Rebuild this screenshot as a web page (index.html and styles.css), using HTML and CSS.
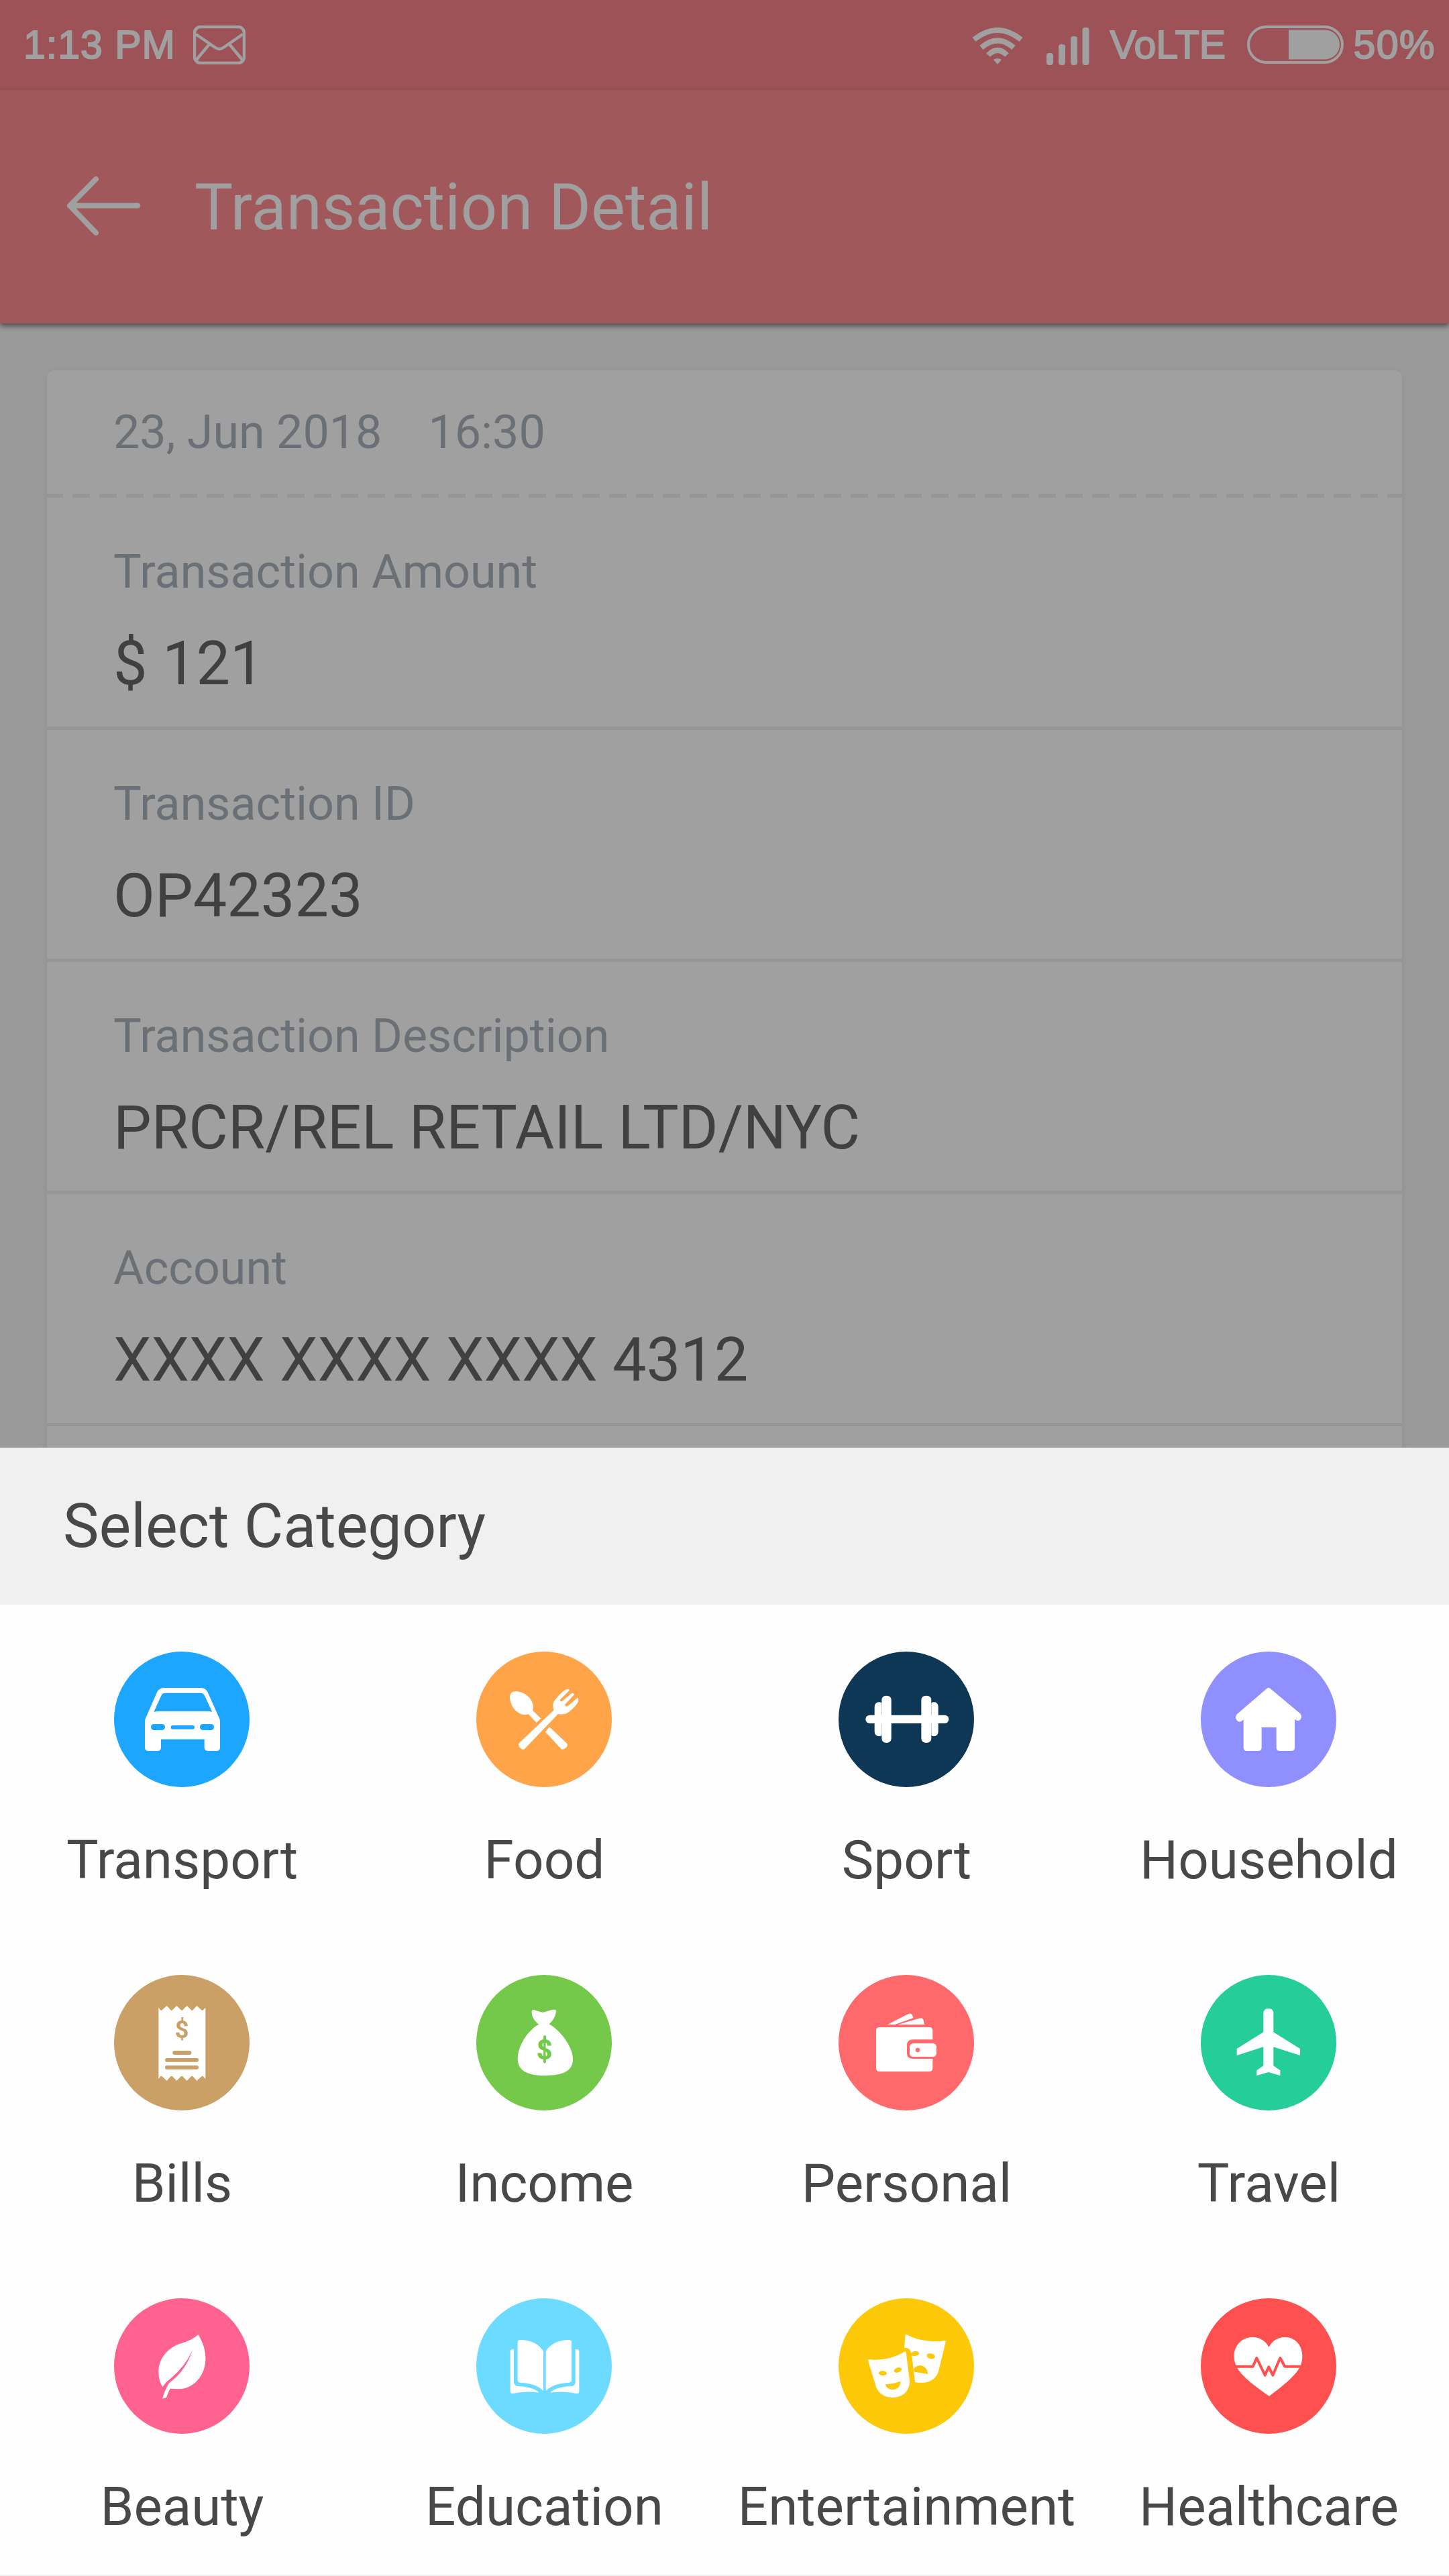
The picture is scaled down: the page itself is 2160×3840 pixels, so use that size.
FILE: index.html
```html
<!DOCTYPE html>
<html lang="en">
<head>
<meta charset="utf-8">
<title>Transaction Detail</title>
<link rel="stylesheet" href="styles.css">
</head>
<body>
<div class="screen">
  <div class="status-bar">
    <div class="status-left">
      <span class="clock">1:13 PM</span>
      <svg class="mail" viewBox="0 0 78 58" fill="none" stroke="currentColor" stroke-width="4.500" stroke-linejoin="round">
        <rect x="2" y="2" width="74" height="54" rx="9"/>
        <path d="M4 13 L33 33 Q39 37 45 33 L74 13 M4 52 L24 28 M74 52 L54 28"/>
      </svg>
    </div>
    <div class="status-right">
      <svg class="wifi" viewBox="0 0 76 56" fill="none" stroke="currentColor" stroke-width="8">
        <path d="M3 18 Q38 -10 73 18"/>
        <path d="M14 30 Q38 9 62 30"/>
        <path d="M24 41 Q38 27 52 41"/>
        <path d="M32 48 Q38 44 44 48 L38 55Z" fill="currentColor" stroke="none"/>
      </svg>
      <svg class="signal" viewBox="0 0 64 56" fill="currentColor">
        <rect x="0" y="38" width="10" height="18" rx="4"/>
        <rect x="18" y="25" width="10" height="31" rx="4"/>
        <rect x="36" y="13" width="10" height="43" rx="4"/>
        <rect x="53.500" y="0" width="10" height="56" rx="4"/>
      </svg>
      <span class="network">VoLTE</span>
      <svg class="battery" viewBox="0 0 144 57">
        <rect x="2" y="2" width="140" height="53" rx="26.500" fill="none" stroke="currentColor" stroke-width="4"/>
        <path d="M62 6.500 H116 A22 22 0 0 1 116 50.500 H62Z" fill="currentColor"/>
      </svg>
      <span class="percent">50%</span>
    </div>
  </div>

  <header class="app-bar">
    <svg class="back" viewBox="0 0 112 88" fill="none" stroke="currentColor" stroke-width="8" stroke-linecap="round" stroke-linejoin="round">
      <path d="M106 43.500 H5 M44 4 L5 43.500 L44 84"/>
    </svg>
    <h1 class="title">Transaction Detail</h1>
  </header>

  <main class="content">
    <section class="card">
      <div class="card-date"><span>23, Jun 2018</span><span>16:30</span></div>
      <div class="perforation"></div>
      <div class="field"><span class="label">Transaction Amount</span><span class="value">$ 121</span></div>
      <div class="field"><span class="label">Transaction ID</span><span class="value">OP42323</span></div>
      <div class="field"><span class="label">Transaction Description</span><span class="value">PRCR/REL RETAIL LTD/NYC</span></div>
      <div class="field"><span class="label">Account</span><span class="value">XXXX XXXX XXXX 4312</span></div>
      <div class="field"></div>
    </section>
  </main>

  <section class="sheet">
    <h2 class="sheet-title">Select Category</h2>
    <div class="grid">
      <div class="category">
        <svg class="icon transport" viewBox="0 0 606 606">
          <path fill="#fff" fill-rule="evenodd" d="M138 312 Q138 304 142 296 L192 182 Q201 162 224 162 H387 Q410 162 419 182 L470 296 Q474 304 474 312 V428 Q474 444 458 444 H421 Q404 444 404 428 V392 H210 V428 Q210 444 194 444 H154 Q138 444 138 428Z M178 270 Q185 267 200 267 H417 Q432 267 439 270 L406 199 Q400 185 386 185 H229 Q216 185 211 197Z"/>
          <g class="cut">
            <rect x="165" y="324" width="63" height="27" rx="13"/>
            <rect x="384" y="324" width="63" height="27" rx="13"/>
            <rect x="254" y="330" width="106" height="17" rx="8"/>
          </g>
        </svg>
        <span class="name">Transport</span>
      </div>
      <div class="category">
        <svg class="icon food" viewBox="0 0 606 606">
          <g fill="#fff">
            <path d="M150 205 C149 186 160 178 179 178 C220 180 257 216 254 250 L253 264 L289 299 L269 318 L233 280 C225 283 216 283 205 281 C172 271 151 237 150 205Z"/>
            <path d="M327 337 L405 410 Q412 417 403 428 Q389 441 380 436 L309 359Z"/>
            <path d="M190 420 Q187 415 192 409 L347 262 C338 243 345 225 352 216 C369 195 383 180 398 171 Q411 164 418 172 L374 216 Q376 225 384 222 L427 186 Q436 184 438 193 L396 237 Q400 248 409 244 L453 206 Q460 212 454 227 C446 242 431 257 413 271 Q393 285 366 279 L217 434 Q209 443 197 431 Q190 426 190 420Z"/>
          </g>
        </svg>
        <span class="name">Food</span>
      </div>
      <div class="category">
        <svg class="icon sport" viewBox="0 0 606 606">
          <g fill="#fff">
            <rect x="121" y="284" width="372" height="37" rx="18"/>
            <path d="M161 248 Q161 226 183 226 Q193 226 193 236 V369 Q193 379 183 379 Q161 379 161 357Z"/>
            <path d="M193 218 Q193 197 214.500 197 Q236 197 236 218 V387 Q236 408 214.500 408 Q193 408 193 387Z"/>
            <path d="M370 218 Q370 197 392.500 197 Q415 197 415 218 V387 Q415 408 392.500 408 Q370 408 370 387Z"/>
            <path d="M415 236 Q415 226 425 226 Q446 226 446 248 V357 Q446 379 425 379 Q415 379 415 369Z"/>
          </g>
        </svg>
        <span class="name">Sport</span>
      </div>
      <div class="category">
        <svg class="icon household" viewBox="0 0 606 606">
          <path fill="#fff" d="M303 162 Q309 162 314 168 L444 277 Q457 290 444 305 Q434 313 425 306 L420 303 V429 Q420 444 405 444 H353 Q338 444 338 429 V339 H272 V429 Q272 444 257 444 H206 Q191 444 191 429 V304 L185 309 Q173 319 162 308 Q149 293 163 279 L292 168 Q298 162 303 162Z"/>
        </svg>
        <span class="name">Household</span>
      </div>

      <div class="category">
        <svg class="icon bills" viewBox="0 0 606 606">
          <path fill="#fff" d="M199 146 L207 157 Q211 161 215 157 L236 138 L253 157 Q257 161 261 157 L280 138 L299 157 Q303 161 307 157 L326 138 L345 157 Q349 161 353 157 L370 138 L391 157 Q395 161 399 157 L409 146 V465 L399 454 Q395 450 391 454 L370 473 L353 454 Q349 450 345 454 L326 473 L307 454 Q303 450 299 454 L280 473 L261 454 Q257 450 253 454 L236 473 L215 454 Q211 450 207 454 L199 465Z"/>
          <g class="cut">
            <text x="303.500" y="283" font-size="108" font-weight="700" text-anchor="middle">$</text>
            <rect x="262" y="339" width="84" height="18" rx="8"/>
            <rect x="228" y="372" width="150" height="17" rx="8"/>
            <rect x="228" y="405" width="150" height="17" rx="8"/>
          </g>
        </svg>
        <span class="name">Bills</span>
      </div>
      <div class="category">
        <svg class="icon income" viewBox="0 0 606 606">
          <path fill="#fff" d="M248 163 Q249 153 264 158 L286 165 Q297 170 308 165 L336 157 Q358 152 357 163 C354 186 342 206 326 220 C376 248 432 322 432 376 C432 430 388 450 309 450 C228 450 185 428 185 374 C185 318 232 244 280 221 C258 205 247 184 248 163Z"/>
          <g class="cut">
            <text x="305" y="378" font-size="126" font-weight="700" text-anchor="middle">$</text>
            <rect x="300.500" y="271" width="10" height="124" rx="5"/>
          </g>
        </svg>
        <span class="name">Income</span>
      </div>
      <div class="category">
        <svg class="icon personal" viewBox="0 0 606 606">
          <g fill="#fff">
            <path d="M219 222 L311 175 Q326 168 330 181 L335 192 L252 222Z"/>
            <path d="M266 222 L361 194 Q376 189 380 203 L384 222Z"/>
            <path d="M168 250 Q168 234 184 234 H405 Q421 234 421 250 V289 H334 Q306 289 306 313 V351 Q306 375 334 375 H421 V416 Q421 432 405 432 H184 Q168 432 168 416Z"/>
            <rect x="318" y="306" width="120" height="60" rx="16"/>
          </g>
          <circle class="cut" cx="354" cy="336" r="9.500"/>
        </svg>
        <span class="name">Personal</span>
      </div>
      <div class="category">
        <svg class="icon travel" viewBox="0 0 606 606">
          <path fill="#fff" d="M280 174 Q280 150 302.500 150 Q325 150 325 174 V256 L444 330 V360 L325 322 V406 L355 427 V450 L302.500 435 L250 450 V427 L280 406 V322 L161 360 V330 L280 256Z"/>
        </svg>
        <span class="name">Travel</span>
      </div>

      <div class="category">
        <svg class="icon beauty" viewBox="0 0 606 606">
          <path fill="#fff" d="M377 162 C395 195 411 231 409 275 C407 350 350 408 287 406 Q268 405 251 404 Q241 422 234 444 L216 449 Q226 410 247 378 Q320 325 352 230 Q315 312 238 371 Q225 384 217 397 Q198 366 199 324 C201 274 230 230 290 205 Q350 188 377 162Z"/>
        </svg>
        <span class="name">Beauty</span>
      </div>
      <div class="category">
        <svg class="icon education" viewBox="0 0 606 606">
          <g fill="#fff">
            <path d="M300 237 C284 207 244 186 196 186 Q185 186 185 197 V366 Q185 376 196 377 Q265 380 300 413Z"/>
            <path d="M311 237 C327 207 367 186 415 186 Q426 186 426 197 V366 Q426 376 415 377 Q346 380 311 413Z"/>
            <path d="M152 239 Q152 228 163 228 H168 V374 Q168 393 193 394 C231 396 262 405 281 422 Q225 414 164 426 Q152 427 152 417Z"/>
            <path d="M460 239 Q460 228 449 228 H443 V374 Q443 393 418 394 C380 396 349 405 330 422 Q386 414 447 426 Q460 427 460 417Z"/>
          </g>
        </svg>
        <span class="name">Education</span>
      </div>
      <div class="category">
        <svg class="icon entertainment" viewBox="0 0 606 606">
          <path fill="#fff" d="M299 162 Q302 160 306 163 C355 190 417 197 473 190 Q481 189 479 195 L447 327 C436 363 398 387 342 375 L328 258 Q325 220 294 221Z"/>
          <path fill="#fff" d="M132 278 Q132 273 139 274 C190 279 251 266 294 239 Q301 236 302 243 L318 369 C319 417 285 444 241 444 C205 444 176 423 167 394Z"/>
          <g class="cut">
            <path d="M326 244 Q334 235 349 237 Q362 241 360 249 Q352 259 337 258 L328 257Z"/>
            <ellipse cx="413" cy="259" rx="19" ry="11.500" transform="rotate(14 413 259)"/>
            <path d="M335 315 Q350 300 367 300 Q397 306 400 339 L340 329Z"/>
            <ellipse cx="198" cy="335" rx="18" ry="10.500" transform="rotate(3 198 335)"/>
            <ellipse cx="265" cy="321" rx="18" ry="10.500" transform="rotate(-20 265 321)"/>
            <path d="M209 385 Q245 383 273 372 Q278 371 277 378 C274 397 259 409 241 409 C225 409 213 399 209 385Z"/>
          </g>
        </svg>
        <span class="name">Entertainment</span>
      </div>
      <div class="category">
        <svg class="icon healthcare" viewBox="0 0 606 606">
          <path fill="#fff" d="M304 219 C320 190 345 174 376 174 C424 174 454 212 454 258 C454 315 424 348 306 438 C176 348 149 309 149 258 C149 212 183 174 231 174 C264 174 292 192 304 219Z"/>
          <path class="pulse" d="M149 305 H233 L250 267 L287 344 L304 307 L322 344 L355 267 L376 305 H454"/>
        </svg>
        <span class="name">Healthcare</span>
      </div>
    </div>
    <div class="next-row"></div>
  </section>
</div>
</body>
</html>
```

FILE: styles.css
```css
* { box-sizing: border-box; }

body {
  margin: 0;
  font-family: Roboto, sans-serif;
}

.screen {
  width: 2160px;
  height: 3840px;
  display: flex;
  flex-direction: column;
  overflow: hidden;
  background: #9a9a9a;
}

svg { display: block; flex: none; }

/* Status bar */
.status-bar {
  flex: none;
  height: 134px;
  padding: 0 20px 0 35px;
  display: flex;
  align-items: center;
  justify-content: space-between;
  background: #9d5257;
  color: #a0a0a0;
  font-family: "Liberation Sans", sans-serif;
  font-size: 59px;
  line-height: 136px;
  -webkit-text-stroke: 2px #a0a0a0;
}
.status-left, .status-right { display: flex; align-items: center; }
.clock { width: 253px; letter-spacing: 1px; white-space: nowrap; }
.mail { width: 78px; height: 58px; }
.wifi { width: 76px; height: 56px; margin-top: 3px; }
.signal { width: 64px; height: 56px; margin: 4px 0 0 35px; }
.network { margin-left: 30px; width: 205px; white-space: nowrap; }
.battery { width: 144px; height: 57px; margin-right: 14px; margin-top: -2px; }
.percent { letter-spacing: 1.5px; }

/* App bar */
.app-bar {
  flex: none;
  height: 348px;
  padding: 0 99px;
  display: flex;
  align-items: center;
  gap: 79px;
  background: #a0585b;
  color: #a0a0a0;
  box-shadow: 0 4px 8px rgba(0, 0, 0, .5);
  position: relative;
}
.back { width: 112px; height: 88px; margin-bottom: 3px; }
.title { margin: 2px 0 0; font-size: 96px; font-weight: 400; line-height: 112px; }

/* Transaction card */
.content {
  flex: none;
  height: 1676px;
  padding: 70px 70px 0;
  overflow: hidden;
}
.card {
  height: 1700px;
  border-radius: 12px;
  background: #a0a0a0;
  box-shadow: 0 2px 12px rgba(0, 0, 0, .06);
}
.card-date {
  height: 184px;
  padding: 51px 99px 0;
  display: flex;
  gap: 69px;
  color: #6a7076;
  font-size: 70px;
  line-height: 82px;
}
.perforation {
  height: 6px;
  background: repeating-linear-gradient(90deg, #969696 0 24px, transparent 24px 38px, #969696 38px 40px);
}
.field {
  height: 346px;
  padding: 69px 99px 0;
  display: flex;
  flex-direction: column;
  gap: 44px;
  border-bottom: 5px solid #969696;
}
.label { color: #6a7076; font-size: 70px; line-height: 82px; }
.value { color: #404040; font-size: 90px; line-height: 105px; }

/* Category sheet */
.sheet {
  flex: none;
  height: 1682px;
  display: flex;
  flex-direction: column;
  background: #fefefe;
}
.sheet-title {
  flex: none;
  margin: 0;
  height: 234px;
  padding: 65px 94px 0;
  background: #f0f0f0;
  color: #484848;
  font-size: 90px;
  font-weight: 400;
  line-height: 105px;
}
.grid {
  flex: 1;
  display: grid;
  grid-template-columns: repeat(4, 540px);
  grid-auto-rows: 482px;
  padding-top: 70px;
  min-height: 0;
}
.category {
  display: flex;
  flex-direction: column;
  align-items: center;
  gap: 62px;
}
.name { color: #484848; font-size: 80px; line-height: 94px; margin-left: 3px; white-space: nowrap; }
.next-row { flex: none; height: 2px; background: #f0f0f0; }

.icon {
  width: 202px;
  height: 202px;
  margin-left: 2px;
  border-radius: 50%;
  background: var(--tint);
  font-family: Roboto, sans-serif;
}
.cut { fill: var(--tint); }
.pulse { fill: none; stroke: var(--tint); stroke-width: 12; stroke-linejoin: round; }

.transport { --tint: #1ca6ff; }
.food { --tint: #ffa449; }
.sport { --tint: #0e3655; }
.household { --tint: #8f8fff; }
.bills { --tint: #caa067; }
.income { --tint: #74c94a; }
.personal { --tint: #ff696b; }
.travel { --tint: #25cd99; }
.beauty { --tint: #ff628f; }
.education { --tint: #6cdbff; }
.entertainment { --tint: #fcc808; }
.healthcare { --tint: #ff5050; }
```
